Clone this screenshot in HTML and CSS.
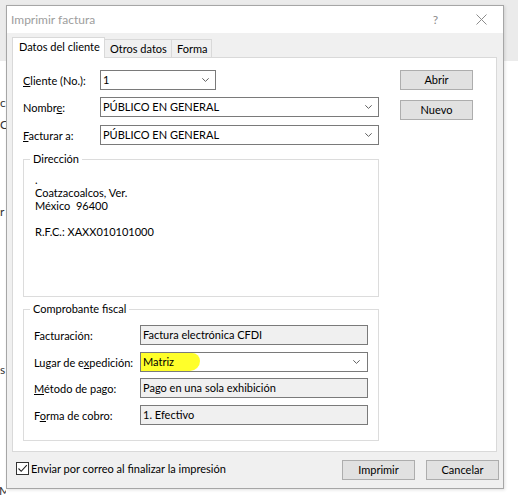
FILE: index.html
```html
<!DOCTYPE html>
<html lang="es">
<head>
<meta charset="utf-8">
<title>Imprimir factura</title>
<link rel="stylesheet" href="styles.css">
</head>
<body>
<div class="screen">
  <div class="backdrop">
    <div class="bd bd1">c</div>
    <div class="bd bd2">C</div>
    <div class="bd bd3">r</div>
    <div class="bd bd4">s</div>
    <div class="bd bd5">M</div>
  </div>
  <div class="window">
    <div class="titlebar">
      <span class="title">Imprimir factura</span>
      <span class="help">?</span>
      <span class="close"><svg width="11" height="11" viewBox="0 0 11 11"><path d="M0.5 0.5L10.5 10.5M10.5 0.5L0.5 10.5" stroke="#8c8c8c" stroke-width="1" fill="none"/></svg></span>
    </div>
    <div class="client">
      <div class="tabs">
        <div class="tab active">Datos del cliente</div>
        <div class="tab t2">Otros datos</div>
        <div class="tab t3">Forma</div>
      </div>
      <div class="panel">
        <div class="top">
          <div class="fields">
            <div class="row">
              <label class="lbl"><u>C</u>liente (No.):</label>
              <div class="combo short"><span class="val">1</span><svg class="chev" width="7" height="4" viewBox="0 0 7 4"><polyline points="0.3,0.3 3.5,3.4 6.7,0.3" fill="none" stroke="#606060" stroke-width="1"/></svg></div>
            </div>
            <div class="row r2">
              <label class="lbl">Nombr<u>e</u>:</label>
              <div class="combo"><span class="val">PÚBLICO EN GENERAL</span><svg class="chev" width="7" height="4" viewBox="0 0 7 4"><polyline points="0.3,0.3 3.5,3.4 6.7,0.3" fill="none" stroke="#606060" stroke-width="1"/></svg></div>
            </div>
            <div class="row r3">
              <label class="lbl"><u>F</u>acturar a:</label>
              <div class="combo"><span class="val">PÚBLICO EN GENERAL</span><svg class="chev" width="7" height="4" viewBox="0 0 7 4"><polyline points="0.3,0.3 3.5,3.4 6.7,0.3" fill="none" stroke="#606060" stroke-width="1"/></svg></div>
            </div>
          </div>
          <div class="side">
            <button class="btn">Abrir</button>
            <button class="btn">Nuevo</button>
          </div>
        </div>

        <div class="group address">
          <div class="legend">Dirección</div>
          <div class="addr">
            <div>.</div>
            <div>Coatzacoalcos, Ver.</div>
            <div>México&nbsp; 96400</div>
            <div>&nbsp;</div>
            <div>R.F.C.: XAXX010101000</div>
          </div>
        </div>

        <div class="group fiscal">
          <div class="legend">Comprobante fiscal</div>
          <div class="frow f1">
            <span class="flbl">Facturación:</span>
            <div class="field">Factura electrónica CFDI</div>
          </div>
          <div class="frow f2">
            <span class="flbl">Lugar de e<u>x</u>pedición:</span>
            <div class="field select"><span class="hl">Matriz</span><span class="spacer"></span><svg class="chev" width="7" height="4" viewBox="0 0 7 4"><polyline points="0.3,0.3 3.5,3.4 6.7,0.3" fill="none" stroke="#606060" stroke-width="1"/></svg></div>
          </div>
          <div class="frow f3">
            <span class="flbl"><u>M</u>étodo de pago:</span>
            <div class="field">Pago en una sola exhibición</div>
          </div>
          <div class="frow f4">
            <span class="flbl">F<u>o</u>rma de cobro:</span>
            <div class="field">1. Efectivo</div>
          </div>
        </div>
      </div>

      <div class="footer">
        <label class="checkrow">
          <span class="check"><svg width="11" height="11" viewBox="0 0 11 11"><polyline points="1.5,5.5 4.2,8.3 9.8,2.2" fill="none" stroke="#222" stroke-width="1.1"/></svg></span>
          <span class="check-label">Enviar por correo al finalizar la impresión</span>
        </label>
        <div class="actions">
          <button class="btn">Imprimir</button>
          <button class="btn">Cancelar</button>
        </div>
      </div>
    </div>
  </div>
</div>
</body>
</html>
```

FILE: styles.css
```css
html, body {
  margin: 0;
  padding: 0;
}

body {
  width: 518px;
  height: 500px;
  overflow: hidden;
  background: linear-gradient(#ebebeb 0, #ebebeb 61px, #ffffff 61px);
  font-family: Lato, "Noto Sans", sans-serif;
  font-size: 11px;
  color: #000;
}

.screen {
  display: flex;
  padding-top: 5px;
}

/* fragments of the application behind the dialog */
.backdrop {
  width: 6px;
  flex: none;
  overflow: hidden;
  display: flex;
  flex-direction: column;
  font-size: 12px;
  line-height: 14px;
  color: #333;
}

.bd { white-space: nowrap; }
.bd1 { margin-top: 91px; }
.bd2 { margin-top: 8px; }
.bd3 { margin-top: 73px; }
.bd4 { margin-top: 144px; }
.bd5 { margin-top: 107px; margin-left: -1px; }

/* dialog window */
.window {
  width: 498px;
  height: 484px;
  box-sizing: border-box;
  border: 1px solid #a6a6a6;
  background: #f0f0f0;
  display: flex;
  flex-direction: column;
  flex: none;
  box-shadow: 1px 1px 3px rgba(0, 0, 0, 0.12);
}

.titlebar {
  height: 27px;
  flex: none;
  background: #fff;
  display: flex;
  align-items: center;
  padding: 0 16px 0 4px;
  color: #9d9d9d;
  font-size: 12px;
}

.title { flex: 1; }

.help {
  font-size: 12px;
  color: #8c8c8c;
  margin-right: 38px;
}

.close svg { display: block; }

.client {
  flex: 1;
  display: flex;
  flex-direction: column;
  padding-top: 4px;
}

/* tabs */
.tabs {
  display: flex;
  align-items: flex-end;
  height: 20px;
  margin-left: 5px;
}

.tab {
  box-sizing: border-box;
  height: 18px;
  border: 1px solid #d9d9d9;
  border-left: 0;
  border-bottom: 0;
  padding: 2px 0 0 5px;
  line-height: 13px;
  white-space: nowrap;
}

.tab.active {
  width: 93px;
  height: 21px;
  margin-bottom: -1px;
  border-left: 1px solid #d9d9d9;
  padding-left: 6px;
  background: #fff;
  position: relative;
  z-index: 1;
}

.tab.t2 { width: 67px; }
.tab.t3 { width: 40px; }

/* tab page */
.panel {
  margin: 0 6px 0 5px;
  height: 395px;
  box-sizing: border-box;
  border: 1px solid #d9d9d9;
  background: #fff;
  padding: 12px 0 0 10px;
  flex: none;
}

.top {
  display: flex;
  gap: 21px;
}

.fields {
  width: 356px;
  display: flex;
  flex-direction: column;
}

.row {
  display: flex;
  align-items: center;
  height: 20px;
}

.row.r2 { margin-top: 7px; }
.row.r3 { margin-top: 8px; }

.lbl {
  width: 77px;
  flex: none;
  line-height: 17px;
  white-space: nowrap;
}

.combo {
  flex: 1;
  box-sizing: border-box;
  height: 20px;
  border: 1px solid #7a7a7a;
  background: #fff;
  display: flex;
  align-items: center;
  padding: 0 6px 0 2px;
}

.combo.short {
  flex: none;
  width: 116px;
}

.val {
  flex: 1;
  line-height: 18px;
  white-space: nowrap;
}

.chev {
  display: block;
  flex: none;
}

.side {
  display: flex;
  flex-direction: column;
  gap: 10px;
}

.btn {
  box-sizing: border-box;
  width: 73px;
  height: 20px;
  margin: 0;
  padding: 0;
  border: 1px solid #adadad;
  background: #e1e1e1;
  font-family: inherit;
  font-size: 11px;
  line-height: 18px;
  color: #000;
  text-align: center;
}

/* group boxes */
.group {
  width: 356px;
  box-sizing: border-box;
  border: 1px solid #dcdcdc;
}

.legend {
  display: table;
  margin: -8px 0 0 6px;
  padding: 0 3px;
  background: #fff;
  line-height: 13px;
}

.address {
  margin-top: 14px;
  height: 138px;
}

.addr {
  margin-top: 8px;
  padding-left: 11px;
  line-height: 13px;
  white-space: nowrap;
}

.fiscal {
  margin-top: 12px;
  height: 132px;
}

.frow {
  display: flex;
  align-items: center;
  height: 20px;
  margin-left: 10px;
}

.frow.f1 { margin-top: 10px; }
.frow.f2 { margin-top: 7px; }
.frow.f3 { margin-top: 6px; }
.frow.f4 { margin-top: 7px; }

.flbl {
  width: 106px;
  flex: none;
  line-height: 17px;
  white-space: nowrap;
}

.field {
  box-sizing: border-box;
  width: 228px;
  height: 20px;
  border: 1px solid #7a7a7a;
  background: #f0f0f0;
  padding-left: 2px;
  line-height: 18px;
  white-space: nowrap;
  display: flex;
  align-items: center;
}

.field.select {
  background: #fff;
  padding: 0 7px 0 0;
}

.hl {
  box-sizing: border-box;
  width: 59px;
  height: 18px;
  padding-left: 2px;
  background: #ffff2a;
  border-radius: 0 8px 10px 0;
}

.spacer { flex: 1; }

/* bottom bar */
.footer {
  flex: 1;
  display: flex;
  align-items: flex-start;
  padding: 0 4px 0 9px;
}

.checkrow {
  display: flex;
  align-items: center;
  margin-top: 10px;
}

.check {
  box-sizing: border-box;
  width: 13px;
  height: 13px;
  border: 1px solid #333;
  background: #fff;
  display: flex;
  align-items: center;
  justify-content: center;
}

.check svg { display: block; }

.check-label {
  margin-left: 2px;
  line-height: 13px;
  white-space: nowrap;
}

.actions {
  margin-left: auto;
  margin-top: 8px;
  display: flex;
  gap: 11px;
}
```
